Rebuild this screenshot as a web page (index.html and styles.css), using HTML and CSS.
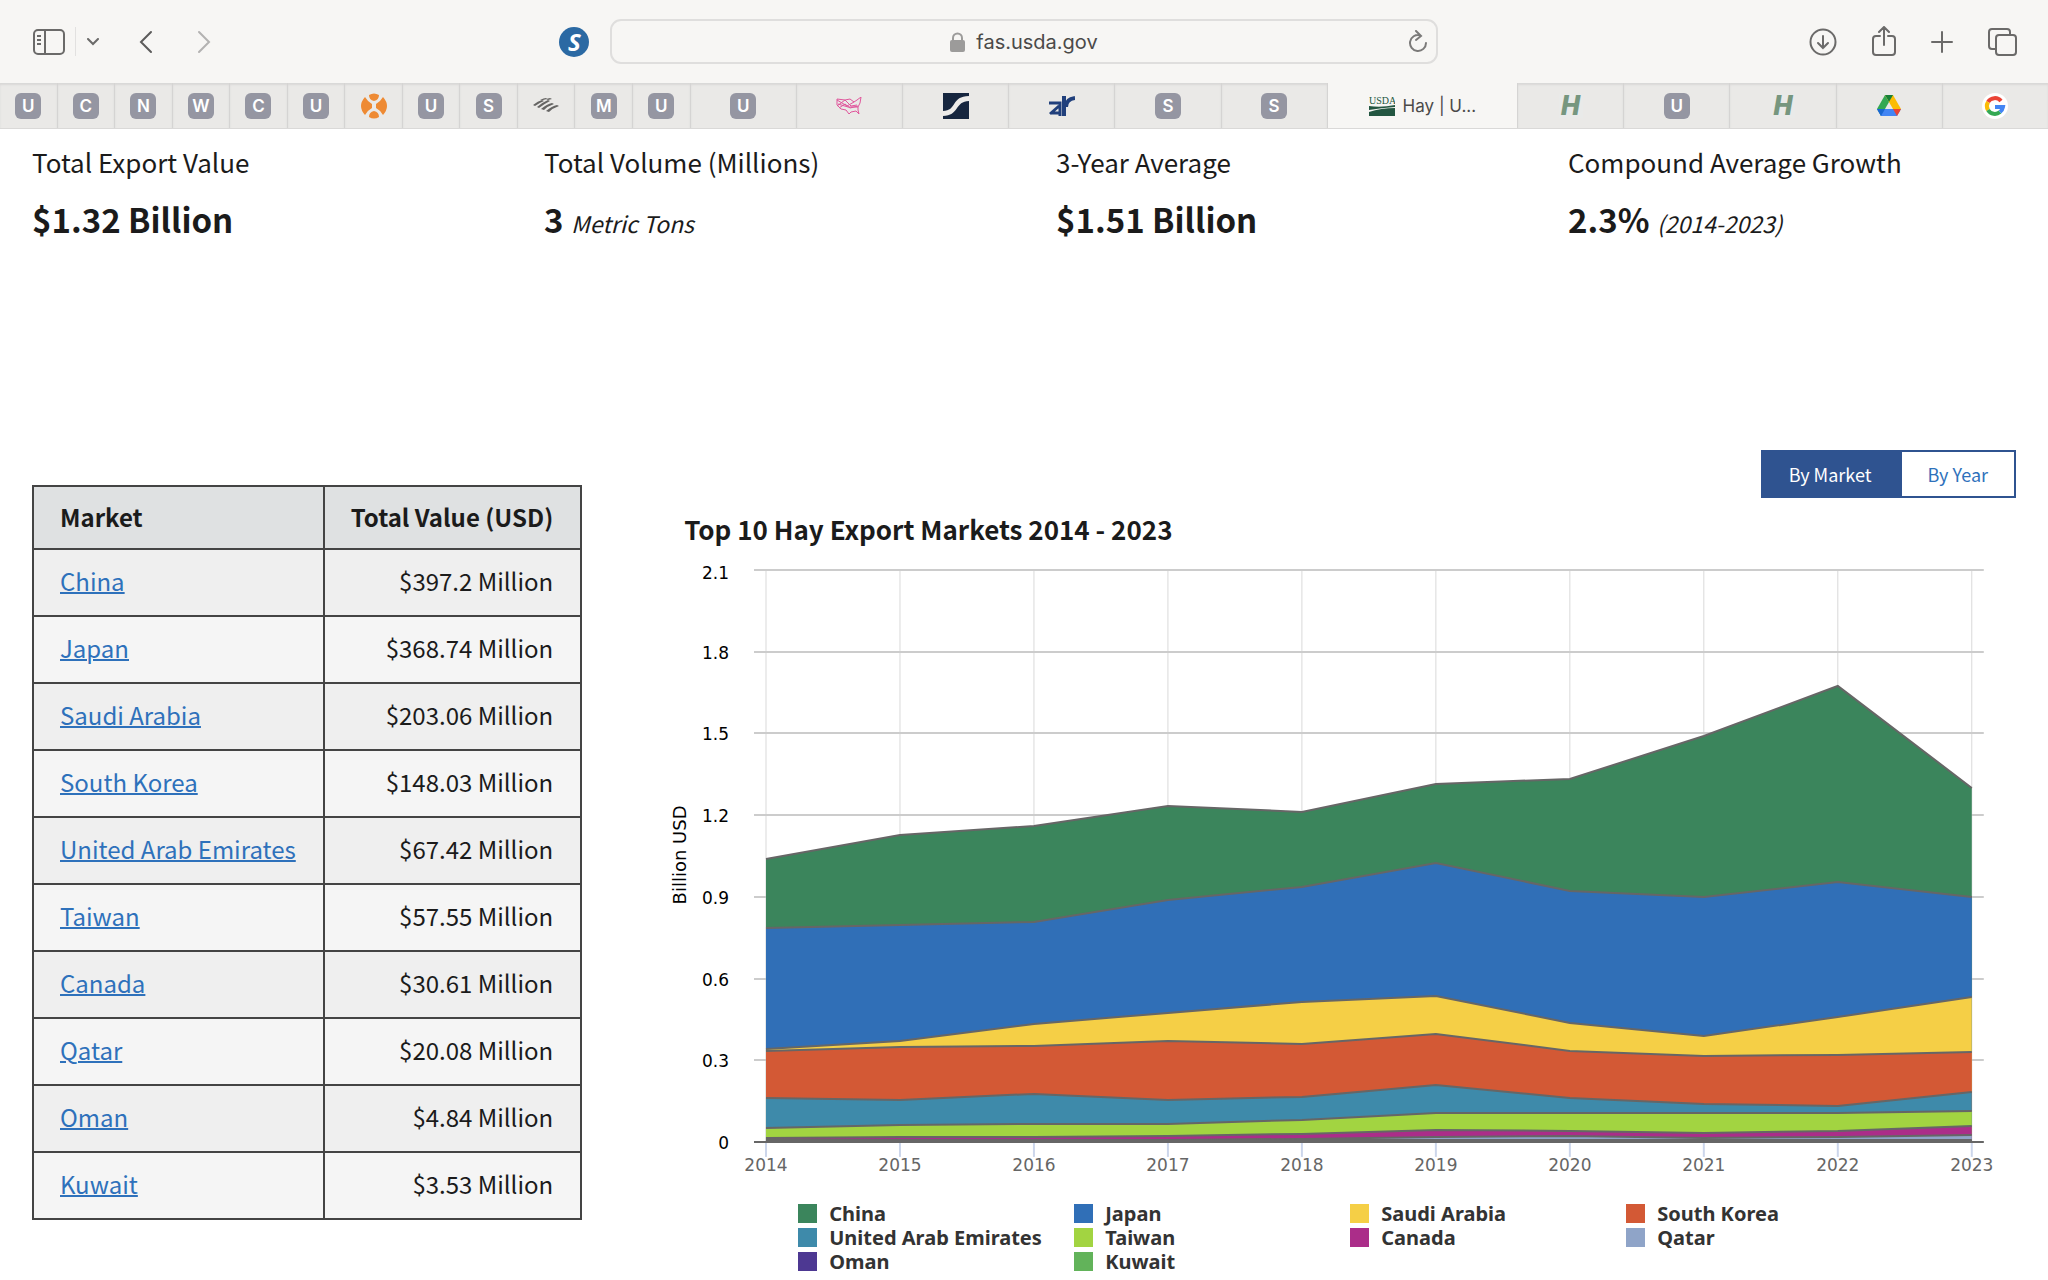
FILE: index.html
```html
<!DOCTYPE html>
<html lang="en">
  <head>
    <meta charset="UTF-8" />
    <meta name="viewport" content="width=device-width, initial-scale=1.0" />
    <title>Hay | USDA Foreign Agricultural Service</title>
    <link rel="stylesheet" href="styles.css">
  </head>
  <body>
    <!-- Browser toolbar -->
    <header class="toolbar">
      <div class="toolbar-left">
        <button type="button" class="icon-btn" aria-label="Sidebar">
          <svg width="32" height="26" viewBox="0 0 32 26" fill="none" stroke="#6b6a69" stroke-width="2">
            <rect x="1" y="1" width="30" height="24" rx="4" />
            <path d="M12 1v24M4 7h4M4 11h4M4 15h4" />
          </svg>
        </button>
        <span class="divider"></span>
        <button type="button" class="icon-btn menu-btn" aria-label="Tab groups">
          <svg width="12" height="8" viewBox="0 0 12 8" fill="none" stroke="#6b6a69" stroke-width="2" stroke-linecap="round">
            <path d="M1 1l5 5 5-5" />
          </svg>
        </button>
        <button type="button" class="icon-btn back-btn" aria-label="Back">
          <svg width="14" height="24" viewBox="0 0 14 24" fill="none" stroke="#5c5b5a" stroke-width="2" stroke-linecap="round">
            <path d="M12 2L2 12l10 10" />
          </svg>
        </button>
        <button type="button" class="icon-btn forward-btn" aria-label="Forward">
          <svg width="14" height="24" viewBox="0 0 14 24" fill="none" stroke="#b3b2b1" stroke-width="2" stroke-linecap="round">
            <path d="M2 2l10 10L2 22" />
          </svg>
        </button>
        <button type="button" class="extension" aria-label="Extension">S</button>
      </div>
      <div class="address">
        <svg width="15" height="20" viewBox="0 0 15 20">
          <rect y="8" width="15" height="12" rx="2" fill="#9c9b9a" />
          <path d="M3 9V6a4 4 0 0 1 9 0v3" fill="none" stroke="#9c9b9a" stroke-width="2" />
        </svg>
        <span>fas.usda.gov</span>
        <button type="button" class="icon-btn reload" aria-label="Reload">
          <svg width="20" height="23" viewBox="0 0 20 23" fill="none" stroke="#7b7a79" stroke-width="2" stroke-linecap="round">
            <path d="M12 5.2A8 8 0 1 0 18 13M8 1l5 5-5 4" />
          </svg>
        </button>
      </div>
      <div class="toolbar-right">
        <button type="button" class="icon-btn" aria-label="Downloads">
          <svg width="28" height="28" viewBox="0 0 28 28" fill="none" stroke="#6b6a69" stroke-width="2" stroke-linecap="round">
            <circle cx="14" cy="14" r="12.5" />
            <path d="M14 8v12M9 15l5 5 5-5" />
          </svg>
        </button>
        <button type="button" class="icon-btn" aria-label="Share">
          <svg width="24" height="32" viewBox="0 0 24 32" fill="none" stroke="#6b6a69" stroke-width="2" stroke-linecap="round">
            <path d="M8 10H4a3 3 0 0 0-3 3v13a3 3 0 0 0 3 3h16a3 3 0 0 0 3-3V13a3 3 0 0 0-3-3h-4M12 19V1M7 6l5-5 5 5" />
          </svg>
        </button>
        <button type="button" class="icon-btn" aria-label="New tab">
          <svg width="22" height="22" viewBox="0 0 22 22" fill="none" stroke="#6b6a69" stroke-width="2" stroke-linecap="round">
            <path d="M11 1v20M1 11h20" />
          </svg>
        </button>
        <button type="button" class="icon-btn" aria-label="Tab overview">
          <svg width="29" height="28" viewBox="0 0 29 28" fill="none" stroke="#6b6a69" stroke-width="2">
            <path d="M8 21H4a3 3 0 0 1-3-3V4a3 3 0 0 1 3-3h15a3 3 0 0 1 3 3v3" />
            <rect x="8" y="7" width="20" height="20" rx="3" />
          </svg>
        </button>
      </div>
    </header>

    <!-- Open tabs -->
    <nav class="tabs">
      <a href="#" class="tab"><span class="letter">U</span></a>
      <a href="#" class="tab"><span class="letter">C</span></a>
      <a href="#" class="tab"><span class="letter">N</span></a>
      <a href="#" class="tab"><span class="letter">W</span></a>
      <a href="#" class="tab"><span class="letter">C</span></a>
      <a href="#" class="tab"><span class="letter">U</span></a>
      <a href="#" class="tab">
        <svg width="26" height="26" viewBox="0 0 26 26" fill="#ee8a33">
          <path d="M8 2q5-3 10 0q0 5-5 6q-5-1-5-6zM8 24q5 3 10 0q0-5-5-6q-5 1-5 6zM4 4q3 5 7 7v4q-4 2-7 7q-8-9 0-18zM22 4q-3 5-7 7v4q4 2 7 7q8-9 0-18z" />
        </svg>
      </a>
      <a href="#" class="tab"><span class="letter">U</span></a>
      <a href="#" class="tab"><span class="letter">S</span></a>
      <a href="#" class="tab">
        <svg width="26" height="16" viewBox="0 0 26 16" fill="#666564">
          <path d="M0 7q5-4 9-5l2 1q-5 2-9 5zM4 9q6-5 11-7l2 1q-6 3-11 7zM8 11q6-5 11-6l2 1q-6 2-10 6zM13 13q6-5 11-6l2 1q-6 2-10 6zM7 2q4-2 6-2l1 1-4 1zM13 1l4-1 2 1-4 1z" />
        </svg>
      </a>
      <a href="#" class="tab"><span class="letter">M</span></a>
      <a href="#" class="tab"><span class="letter">U</span></a>
      <a href="#" class="tab wide"><span class="letter">U</span></a>
      <a href="#" class="tab wide">
        <svg width="26" height="18" viewBox="0 0 26 18" fill="none" stroke="#e0559b" stroke-width="1">
          <path d="M1 2l8 1 5-1 4 3 3-2 4-3-1 6-2 4v3l1 4-3-3-5 1-2 2-3-4-5-1-4-4zM1 9l8-6 6 6 6-1M1 3l10 6 7-4M3 11l6-4 5 4 8-2M2 7l10 3 10 0" />
        </svg>
      </a>
      <a href="#" class="tab wide">
        <svg width="26" height="26" viewBox="0 0 26 26">
          <rect width="26" height="26" fill="#16263f" />
          <path d="M0 18c14 0 8-15 26-15v5C12 8 16 23 0 23z" fill="#ecebe9" />
        </svg>
      </a>
      <a href="#" class="tab wide">
        <svg width="26" height="20" viewBox="0 0 26 20" fill="none" stroke="#21407c" stroke-width="3">
          <path d="M0 7h11v13M1 18l9-8M3 17h7" />
          <path d="M15 0v20M17 11q0-8 9-9" stroke-width="4" />
        </svg>
      </a>
      <a href="#" class="tab wide"><span class="letter">S</span></a>
      <a href="#" class="tab wide"><span class="letter">S</span></a>
      <a href="#" class="tab active">
        <svg width="26" height="20" viewBox="0 0 26 20">
          <text x="0" y="8" class="usda-mark">USDA</text>
          <path d="M0 10q12 2 26-1v2Q12 12 0 14zM0 20v-4q12-4 26-4v8z" fill="#235641" />
        </svg>
        <span>Hay | U...</span>
      </a>
      <a href="#" class="tab wide"><span class="h-mark">H</span></a>
      <a href="#" class="tab wide"><span class="letter">U</span></a>
      <a href="#" class="tab wide"><span class="h-mark">H</span></a>
      <a href="#" class="tab wide">
        <svg width="24" height="21" viewBox="0 0 24 21">
          <path d="M8 0L0 14l4 7 8-14z" fill="#34a853" />
          <path d="M8 0h8l8 14h-8z" fill="#fbbc04" />
          <path d="M0 14h24l-4 7H4z" fill="#4285f4" />
          <path d="M16 14h8l-4 7z" fill="#ea4335" />
          <path d="M0 14h8l-4 7z" fill="#1967d2" />
          <path d="M8 0h8l-4 7z" fill="#188038" />
        </svg>
      </a>
      <a href="#" class="tab wide">
        <svg width="26" height="26" viewBox="0 0 26 26" fill="none" stroke-width="4">
          <circle cx="13" cy="13" r="13" fill="#fff" />
          <path d="M19 8a8 8 0 0 0-13 1" stroke="#ea4335" />
          <path d="M6 9a8 8 0 0 0 0 8" stroke="#fbbc05" />
          <path d="M6 17a8 8 0 0 0 12 2" stroke="#34a853" />
          <path d="M18 19a8 8 0 0 0 3-5h-8" stroke="#4285f4" />
        </svg>
      </a>
    </nav>

    <section class="stats">
      <div class="stat">
        <div class="stat-label">Total Export Value</div>
        <div class="stat-value">$1.32 Billion</div>
      </div>
      <div class="stat">
        <div class="stat-label">Total Volume (Millions)</div>
        <div class="stat-value">3 <em>Metric Tons</em></div>
      </div>
      <div class="stat">
        <div class="stat-label">3-Year Average</div>
        <div class="stat-value">$1.51 Billion</div>
      </div>
      <div class="stat">
        <div class="stat-label">Compound Average Growth</div>
        <div class="stat-value">2.3% <em>(2014-2023)</em></div>
      </div>
    </section>

    <main class="content">
      <table class="markets">
        <thead>
          <tr>
            <th>Market</th>
            <th>Total Value (USD)</th>
          </tr>
        </thead>
        <tbody>
          <tr><td><a href="#">China</a></td><td>$397.2 Million</td></tr>
          <tr><td><a href="#">Japan</a></td><td>$368.74 Million</td></tr>
          <tr><td><a href="#">Saudi Arabia</a></td><td>$203.06 Million</td></tr>
          <tr><td><a href="#">South Korea</a></td><td>$148.03 Million</td></tr>
          <tr><td><a href="#">United Arab Emirates</a></td><td>$67.42 Million</td></tr>
          <tr><td><a href="#">Taiwan</a></td><td>$57.55 Million</td></tr>
          <tr><td><a href="#">Canada</a></td><td>$30.61 Million</td></tr>
          <tr><td><a href="#">Qatar</a></td><td>$20.08 Million</td></tr>
          <tr><td><a href="#">Oman</a></td><td>$4.84 Million</td></tr>
          <tr><td><a href="#">Kuwait</a></td><td>$3.53 Million</td></tr>
        </tbody>
      </table>

      <section class="chart">
        <div class="toggle">
          <button type="button" class="selected">By Market</button>
          <button type="button">By Year</button>
        </div>
        <h2>Top 10 Hay Export Markets 2014 - 2023</h2>
        <svg id="plot" class="plot" viewBox="-8 0 1352 620"></svg>
        <ul id="legend" class="legend"></ul>
      </section>
    </main>

    <script src="chart.js"></script>
  </body>
</html>
```
FILE: styles.css
```css
* {
  box-sizing: border-box;
}

body {
  margin: 0;
  background: #fff;
  color: #1b1b1b;
  font-family: "Noto Sans CJK JP", "Open Sans", sans-serif;
  font-size: 24px;
}

button {
  font-family: inherit;
  cursor: pointer;
}

/* Browser toolbar */
.toolbar {
  display: grid;
  grid-template-columns: 7fr 10fr 7fr;
  align-items: center;
  height: 83px;
  padding: 0 31px;
  background: #f7f6f4;
  font-family: Inter, "Liberation Sans", sans-serif;
}

.toolbar-left,
.toolbar-right {
  display: flex;
  align-items: center;
}

.toolbar-right {
  justify-content: flex-end;
  gap: 35px;
}

.icon-btn {
  display: flex;
  padding: 0;
  border: 0;
  background: none;
}

.toolbar-left .icon-btn:first-child {
  margin-left: 2px;
}

.divider {
  width: 1px;
  height: 29px;
  margin-left: 10px;
  background: #e2e1e0;
}

.menu-btn {
  margin-left: 11px;
}

.back-btn {
  margin-left: 40px;
}

.forward-btn {
  margin-left: 44px;
}

.extension {
  width: 30px;
  height: 30px;
  margin-left: auto;
  margin-right: 21px;
  padding: 0;
  border: 0;
  border-radius: 50%;
  background: #2b69a3;
  color: #fff;
  font: italic bold 24px/30px "Open Sans", sans-serif;
}

.address {
  position: relative;
  display: flex;
  align-items: center;
  justify-content: center;
  gap: 11px;
  height: 45px;
  border: 2px solid #dfdedd;
  border-radius: 11px;
  color: #4b4a49;
  font-size: 20px;
}

.reload {
  position: absolute;
  right: 8px;
}

/* Tab strip */
.tabs {
  display: flex;
  height: 46px;
  background: #eae9e7;
  border-bottom: 1px solid #dad9d8;
}

.tab {
  display: flex;
  flex: 129 1 0;
  align-items: center;
  justify-content: center;
  gap: 8px;
  border-right: 1px solid #d5d4d3;
  box-shadow: inset 0 2px 2px #d9d8d7;
  color: #4b4a49;
  font-family: Inter, "Liberation Sans", sans-serif;
  font-size: 17px;
  text-decoration: none;
}

.tab.wide {
  flex-grow: 240;
}

.tab.active {
  flex-grow: 432;
  background: #f7f6f4;
  box-shadow: none;
}

.tab:last-child {
  border-right: 0;
}

.letter {
  width: 26px;
  height: 26px;
  border-radius: 6px;
  background: #9596a2;
  color: #fff;
  font-size: 17px;
  font-weight: 600;
  line-height: 27px;
  text-align: center;
}

.h-mark {
  width: 24px;
  height: 24px;
  background: #e9eae9;
  color: #76967f;
  font: italic 900 28px/24px Roboto, "Liberation Sans", sans-serif;
  text-align: center;
}

.usda-mark {
  fill: #235641;
  font: 10px "Liberation Serif", serif;
}

/* Export summary */
.stats {
  display: grid;
  grid-template-columns: repeat(4, 1fr);
  padding-top: 16px;
}

.stat {
  padding-left: 32px;
}

.stat-label {
  font-size: 26px;
  line-height: 34px;
}

.stat-value {
  margin-top: 18px;
  font-size: 33px;
  font-weight: bold;
  line-height: 44px;
}

.stat-value em {
  font-size: 23px;
  font-weight: normal;
}

/* Table and chart */
.content {
  display: flex;
  align-items: flex-start;
  gap: 82px;
  margin-top: 205px;
  padding: 0 32px;
}

.markets {
  flex: none;
  margin-top: 35px;
  border-collapse: collapse;
  line-height: 35px;
  white-space: nowrap;
}

.markets th,
.markets td {
  padding: 13px 27px 17px 26px;
  border: 2px solid #444;
  text-align: left;
}

.markets th {
  padding-top: 12px;
  padding-bottom: 14px;
  background: #dfe1e2;
  font-weight: bold;
}

.markets th:last-child,
.markets td:last-child {
  text-align: right;
}

.markets td {
  background: #f5f5f5;
}

.markets tr:nth-child(odd) td {
  background: #efefef;
}

.markets a {
  color: #2e71bb;
  text-decoration-thickness: 2px;
}

.chart {
  flex: 1;
  min-width: 0;
}

.toggle {
  display: flex;
  justify-content: flex-end;
}

.toggle button {
  height: 48px;
  padding: 0 26px;
  border: 2px solid #2f5390;
  background: #fff;
  color: #2e71bb;
  font-size: 18px;
}

.toggle .selected {
  background: #2f5390;
  color: #fff;
}

.chart h2 {
  margin: 14px 0 10px 20px;
  font-size: 26px;
  line-height: 34px;
}

.plot {
  display: block;
  width: 100%;
  font-family: "DejaVu Sans", sans-serif;
  font-size: 17px;
}

.grid-x {
  stroke: #d9d9d9;
  stroke-width: 1;
}

.grid-y {
  stroke: #ccc;
  stroke-width: 2;
}

.tick {
  stroke: #ccd6eb;
  stroke-width: 2;
}

.axis {
  stroke: #666;
  stroke-width: 2;
}

.outline {
  fill: none;
  stroke: #666;
  stroke-width: 2;
}

.x-label {
  fill: #666;
  text-anchor: middle;
}

.y-label {
  text-anchor: end;
}

.y-title {
  font-size: 18px;
  text-anchor: middle;
}

.legend {
  display: grid;
  grid-template-columns: repeat(4, 276px);
  margin: 26px 0 0 134px;
  padding: 0;
  list-style: none;
  color: #333;
  font-family: "Noto Sans", sans-serif;
  font-size: 20px;
  font-weight: bold;
  line-height: 24px;
}

.legend li {
  display: flex;
  align-items: center;
  gap: 12px;
}

.swatch {
  width: 19px;
  height: 19px;
}
```
FILE: chart.js
```js
var years = [2014, 2015, 2016, 2017, 2018, 2019, 2020, 2021, 2022, 2023];

// Stacked totals in million USD, widest band first
var series = [
  { name: "China", color: "#3b855c", totals: [1040, 1126, 1160, 1232, 1211, 1314, 1331, 1491, 1673, 1299] },
  { name: "Japan", color: "#306fb7", totals: [784, 795, 806, 890, 938, 1025, 922, 899, 955, 901] },
  { name: "Saudi Arabia", color: "#f5cf46", totals: [340, 371, 433, 475, 514, 535, 438, 389, 459, 532] },
  { name: "South Korea", color: "#d35935", totals: [333, 348, 354, 369, 361, 395, 335, 317, 321, 330] },
  { name: "United Arab Emirates", color: "#3e8aaa", totals: [161, 156, 176, 156, 165, 211, 162, 139, 134, 182] },
  { name: "Taiwan", color: "#a2d441", totals: [52, 62, 67, 65, 80, 105, 105, 105, 105, 115] },
  { name: "Canada", color: "#ab2d89", totals: [13, 19, 19, 21, 28, 43, 40, 32, 40, 57] },
  { name: "Qatar", color: "#8fa4c8", totals: [7, 8, 8, 9, 10, 20, 21, 16, 20, 27] },
  { name: "Oman", color: "#4d3892", totals: [4, 4, 4, 5, 6, 9, 9, 8, 9, 8] },
  { name: "Kuwait", color: "#62b35a", totals: [2, 2, 2, 2, 3, 4, 4, 4, 4, 4] },
];

var left = 94;
var right = 1300;
var top0 = 14;
var bottom = 586;

function xPos(i) {
  return Math.round(left + ((right - left) * i) / (years.length - 1));
}

function yPos(value) {
  return Math.round(bottom - ((bottom - top0) * value) / 2100);
}

function line(cls, x1, y1, x2, y2) {
  return '<line class="' + cls + '" x1="' + x1 + '" y1="' + y1 + '" x2="' + x2 + '" y2="' + y2 + '" />';
}

function drawChart() {
  var svg = "";
  years.forEach(function (year, i) {
    svg += line("grid-x", xPos(i), top0, xPos(i), bottom);
    svg += line("tick", xPos(i), bottom, xPos(i), bottom + 15);
    svg += '<text class="x-label" x="' + xPos(i) + '" y="' + (bottom + 29) + '">' + year + "</text>";
  });
  for (var v = 0; v <= 2100; v += 300) {
    var y = yPos(v);
    svg += line("grid-y", left - 12, y, right + 12, y);
    var label = v === 0 ? "0" : (v / 1000).toFixed(1);
    svg += '<text class="y-label" x="57" y="' + (v === 2100 ? y + 9 : y + 7) + '">' + label + "</text>";
  }
  svg += '<text class="y-title" transform="translate(14 299) rotate(-90)">Billion USD</text>';

  var areas = "";
  var outlines = "";
  series.forEach(function (s) {
    var points = s.totals
      .map(function (value, i) {
        return xPos(i) + "," + yPos(value);
      })
      .join(" ");
    areas += '<polygon fill="' + s.color + '" points="' + points + " " + right + "," + bottom + " " + left + "," + bottom + '" />';
    outlines += '<polyline class="outline" points="' + points + '" />';
  });
  svg += areas + outlines + line("axis", left - 12, bottom, right + 12, bottom);
  document.getElementById("plot").innerHTML = svg;
}

function drawLegend() {
  document.getElementById("legend").innerHTML = series
    .map(function (s) {
      return '<li><span class="swatch" style="background: ' + s.color + '"></span>' + s.name + "</li>";
    })
    .join("");
}

drawChart();
drawLegend();
```
